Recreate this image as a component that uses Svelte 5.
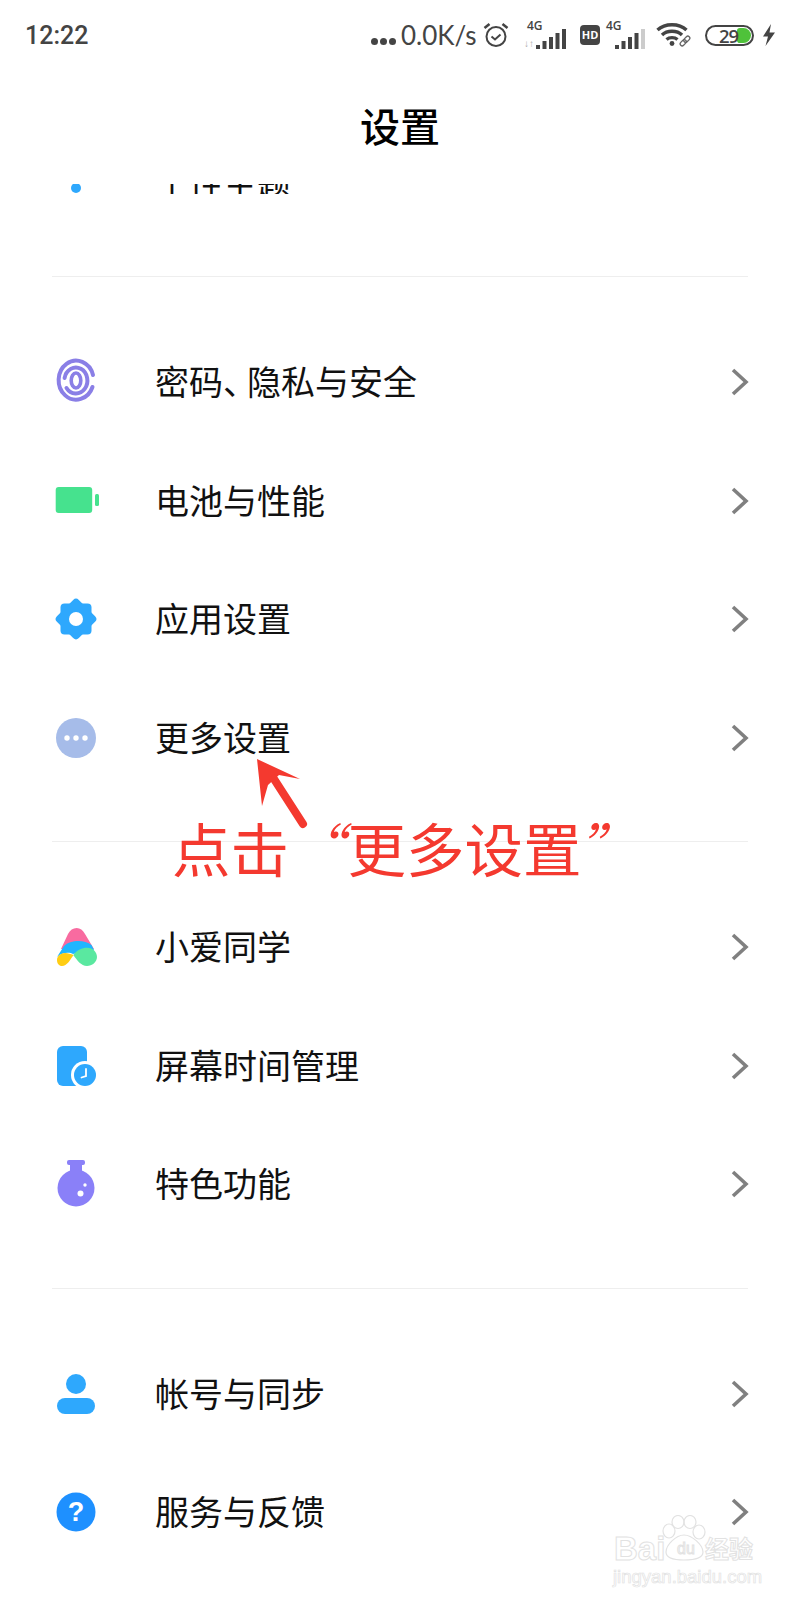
<script>
  const groups = [
    [
      { icon: 'finger', label: '密码', sep: '、', rest: '隐私与安全' },
      { icon: 'battery', label: '电池与性能' },
      { icon: 'gear', label: '应用设置' },
      { icon: 'more', label: '更多设置' }
    ],
    [
      { icon: 'xiaoai', label: '小爱同学' },
      { icon: 'screen', label: '屏幕时间管理' },
      { icon: 'flask', label: '特色功能' }
    ],
    [
      { icon: 'user', label: '帐号与同步' },
      { icon: 'help', label: '服务与反馈' }
    ]
  ]
</script>

{#snippet bars(lastDim)}
  <svg class="signal" width="30" height="22" viewBox="0 0 30 22">
    <rect x="0" y="17" width="4" height="4" fill="#444" />
    <rect x="6.5" y="13" width="4" height="8" fill="#444" />
    <rect x="13" y="9" width="4" height="12" fill="#444" />
    <rect x="19.5" y="5" width="4" height="16" fill="#444" />
    <rect x="26" y="1" width="4" height="20" fill={lastDim ? '#ccc' : '#444'} />
  </svg>
{/snippet}

{#snippet rowIcon(name)}
  <svg width="56" height="56" viewBox="0 0 56 56">
    {#if name === 'finger'}
      <g fill="none" stroke="#8a7fe6" stroke-width="4" stroke-linecap="round">
        <path d="M45 21 A17.5 19.5 0 1 0 44.5 33" />
        <path d="M16.6 24 A11.5 13 0 1 1 18.5 34" />
        <ellipse cx="28" cy="26.5" rx="4.8" ry="7.5" stroke-width="3.6" />
      </g>
    {:else if name === 'battery'}
      <rect x="7.7" y="14" width="36.5" height="26" rx="3" fill="#46e28e" />
      <rect x="47" y="21" width="4" height="12" rx="1.5" fill="#46e28e" />
    {:else if name === 'gear'}
      <rect x="12.5" y="12.5" width="31" height="31" rx="4" fill="#2ea8fd" />
      <rect x="12.5" y="12.5" width="31" height="31" rx="4" fill="#2ea8fd" transform="rotate(45 28 28)" />
      <circle cx="28" cy="28" r="7" fill="#fff" />
    {:else if name === 'more'}
      <circle cx="28" cy="28" r="20" fill="#a6bce9" />
      <circle cx="19" cy="28" r="2.7" fill="#fff" />
      <circle cx="28" cy="28" r="2.7" fill="#fff" />
      <circle cx="37" cy="28" r="2.7" fill="#fff" />
    {:else if name === 'xiaoai'}
      <path d="M28.7 9 C25 9 22 11 20 15 L13 30 L46 30 L37 15 C35 11 32 9 28.7 9 Z" fill="#f86ba0" />
      <path d="M16 27 C22 21 36 20 43.5 26 L46 31 L25 35 C22 33 14 33 9 38 Z" fill="#1fb6ff" />
      <path d="M9 41 C9 37 13 34 17 34 C20 34 23 35 25.5 36 C22 41 19 47 14 47 C11 47 9 44.5 9 41 Z" fill="#ffcd14" />
      <path d="M25.3 36 C29 31 34 28.7 39 28.7 C45 28.7 49 33 49 38 C49 43 44 47 39 47 C33 47 29 41 25.3 36 Z" fill="#5ae8a0" />
    {:else if name === 'screen'}
      <rect x="9" y="8" width="30" height="40" rx="6" fill="#2ea8fd" />
      <circle cx="37" cy="37" r="14" fill="#fff" />
      <circle cx="37" cy="37" r="11" fill="#2ea8fd" />
      <path d="M38 31 L38 38 L33.5 39.5" fill="none" stroke="#fff" stroke-width="1.8" stroke-linecap="round" />
    {:else if name === 'flask'}
      <rect x="19" y="4" width="18" height="5" rx="2" fill="#8a80f8" />
      <rect x="22" y="7" width="12" height="12" fill="#8a80f8" />
      <circle cx="28" cy="32" r="18.5" fill="#8a80f8" />
      <circle cx="32.5" cy="37.5" r="3" fill="#fff" />
      <circle cx="37" cy="29" r="1.7" fill="#fff" />
    {:else if name === 'user'}
      <circle cx="28" cy="18" r="10" fill="#2ea8fd" />
      <rect x="9" y="32" width="38" height="16" rx="8" fill="#2ea8fd" />
    {:else if name === 'help'}
      <circle cx="28" cy="28" r="19.5" fill="#1e90ff" />
      <text x="28" y="37" text-anchor="middle" class="qmark">?</text>
    {/if}
  </svg>
{/snippet}

<div class="screen">
  <div class="statusbar">
    <span class="time">12:22</span>
    <div class="status-right">
      <span class="dots"><i></i><i></i><i></i></span>
      <span class="speed">0.0K/s</span>
      <svg class="alarm" width="26" height="26" viewBox="0 0 26 26" fill="none" stroke="#444">
        <circle cx="13" cy="14.5" r="9.5" stroke-width="2" />
        <path d="M8.5 14.5 L12 17.5 L17.5 12.5" stroke-width="2" />
        <path d="M1.5 6 L6.5 2 M24.5 6 L19.5 2" stroke-width="2.6" />
      </svg>
      <div class="net first">
        <span class="g4">4G</span>
        <span class="updown">↓↑</span>
        {@render bars(false)}
      </div>
      <span class="hd">HD</span>
      <div class="net">
        <span class="g4">4G</span>
        {@render bars(true)}
      </div>
      <svg class="wifi" width="36" height="26" viewBox="0 0 36 26" fill="none" stroke="#444" stroke-width="3.4">
        <path d="M1.5 8 C9 1 23 1 30.5 8" />
        <path d="M6 13 C11 8 21 8 26 13" />
        <path d="M10.5 17.5 C13.5 15 18.5 15 21.5 17.5" />
        <circle cx="16" cy="21.5" r="2.4" fill="#444" stroke="none" />
        <g stroke="#666" stroke-width="1.3" transform="rotate(-45 29 19)">
          <rect x="23" y="17" width="7" height="4" rx="2" />
          <rect x="28" y="17" width="7" height="4" rx="2" />
        </g>
      </svg>
      <div class="battery">
        <span class="level">29</span>
        <span class="charge"></span>
      </div>
      <svg class="bolt" width="14" height="22" viewBox="0 0 14 22">
        <path d="M9 0 L1 12.5 L6 12.5 L3.5 22 L13 8.5 L7.5 8.5 Z" fill="#444" />
      </svg>
    </div>
  </div>

  <header class="title">设置</header>

  <div class="clip-row">
    <svg width="56" height="56" viewBox="0 0 56 56">
      <circle cx="28" cy="28" r="5" fill="#2ea8fd" />
    </svg>
    <span class="row-label">个性主题</span>
  </div>

  <div class="list">
    {#each groups as group}
      <section class="group">
        {#each group as row}
          <div class="row">
            <span class="row-icon">{@render rowIcon(row.icon)}</span>
            <span class="row-label">{row.label}{#if row.sep}<span class="sep">{row.sep}</span>{row.rest}{/if}</span>
            <svg class="chevron" width="18" height="28" viewBox="0 0 18 28" fill="none">
              <path d="M2 2 L15 14 L2 26" stroke="#808080" stroke-width="3.6" />
            </svg>
          </div>
        {/each}
      </section>
    {/each}
  </div>

  <!-- annotation drawn on top of the screenshot -->
  <svg class="arrow" width="70" height="80" viewBox="0 0 70 80">
    <path d="M1 1 L44 21 L23 17 L12 27 L6 48 Z" fill="#f4392f" />
    <path d="M18 21 L47 66" stroke="#f4392f" stroke-width="8" stroke-linecap="round" />
  </svg>
  <div class="note">点击<span class="quote open">“</span>更多设置<span class="quote close">”</span></div>

  <div class="watermark">
    <svg class="paw" width="46" height="46" viewBox="0 0 46 46" fill="none" stroke="#e2e2e2" stroke-width="1.2">
      <ellipse cx="7" cy="16" rx="6" ry="7" />
      <ellipse cx="16" cy="7" rx="6" ry="6.5" />
      <ellipse cx="28" cy="7" rx="6" ry="6.5" />
      <ellipse cx="37" cy="17" rx="6" ry="7" />
      <path d="M22 20 C14 20 4 30 4 37 C4 43 10 45 22 45 C34 45 41 43 41 37 C41 30 30 20 22 20 Z" />
    </svg>
    <span class="wm-bai">Bai</span>
    <span class="wm-du">du</span>
    <span class="wm-cn">经验</span>
    <span class="wm-url">jingyan.baidu.com</span>
  </div>
</div>

<style>
  :global(body) {
    margin: 0;
    background: #fff;
  }

  .screen {
    position: relative;
    width: 800px;
    height: 1600px;
    overflow: hidden;
    background: #fff;
    color: #111;
    font-family: "Noto Sans CJK SC", "Noto Sans", sans-serif;
  }

  .statusbar {
    height: 70px;
    padding: 0 24px 0 25px;
    display: flex;
    align-items: center;
    justify-content: space-between;
    box-sizing: border-box;
    color: #444;
    font-family: "Open Sans", sans-serif;
  }

  .time {
    font-family: Roboto, sans-serif;
    font-size: 25px;
    font-weight: 500;
  }

  .status-right {
    display: flex;
    align-items: center;
  }

  .dots {
    display: flex;
    gap: 2px;
    margin-top: 12px;
  }

  .dots i {
    width: 7px;
    height: 7px;
    border-radius: 50%;
    background: #444;
  }

  .speed {
    width: 76px;
    font-family: Lato, sans-serif;
    font-size: 26px;
    margin-left: 5px;
    white-space: nowrap;
  }

  .alarm {
    margin-left: 6px;
  }

  .net {
    position: relative;
    width: 39px;
    height: 30px;
    margin-left: 6px;
    display: flex;
    justify-content: flex-end;
    align-items: flex-end;
  }

  .net.first {
    width: 42px;
    margin-left: 15px;
  }

  .net.first .g4 {
    left: 3px;
  }

  .g4 {
    position: absolute;
    left: 0;
    top: 0;
    font-size: 12px;
    line-height: 12px;
    font-weight: 600;
  }

  .updown {
    position: absolute;
    left: 0;
    bottom: 2px;
    font-size: 10px;
    line-height: 10px;
    color: #aaa;
  }

  .hd {
    width: 20px;
    height: 20px;
    margin-left: 14px;
    border-radius: 4px;
    background: #444;
    color: #fff;
    font-size: 11px;
    font-weight: 700;
    line-height: 20px;
    text-align: center;
  }

  .wifi {
    margin-left: 11px;
    margin-right: -2px;
  }

  .battery {
    position: relative;
    width: 49px;
    height: 21px;
    margin-left: 15px;
    box-sizing: border-box;
    border: 2px solid #444;
    border-radius: 11px;
    font-size: 18.5px;
    font-weight: 600;
    line-height: 17px;
    letter-spacing: -1px;
  }

  .level {
    position: absolute;
    left: 12px;
    top: 0;
    z-index: 1;
  }

  .charge {
    position: absolute;
    right: 1px;
    top: 1px;
    width: 14px;
    height: 15px;
    border-radius: 3px 8px 8px 3px;
    background: #4fc23a;
  }

  .bolt {
    margin-left: 8px;
  }

  .title {
    height: 114px;
    line-height: 110px;
    text-align: center;
    font-size: 40px;
    font-weight: 500;
    color: #000;
  }

  .clip-row {
    height: 10px;
    padding-left: 48px;
    display: flex;
    align-items: flex-end;
    overflow: hidden;
  }

  .clip-row svg {
    flex: none;
    margin-bottom: -21.7px;
  }

  .clip-row .row-label {
    flex: none;
    margin-left: 51px;
    margin-bottom: -22px;
    line-height: 60px;
    height: 60px;
  }

  .list {
    margin: 0 52px;
    padding-top: 82px;
  }

  .group {
    padding: 46px 0 44px;
    border-top: 1px solid #eeeeee;
    margin: 0;
  }

  .row {
    height: 118.5px;
    display: flex;
    align-items: center;
  }

  .row-icon {
    flex: none;
    width: 103px;
    margin-left: -4px;
    margin-right: 4px;
    display: flex;
  }

  .row-label {
    flex: 1;
    font-size: 34px;
    padding-bottom: 3px;
    color: #111;
  }

  .sep {
    letter-spacing: -10px;
  }

  .chevron {
    flex: none;
    margin-right: -1px;
  }

  .qmark {
    fill: #fff;
    font-family: "Liberation Sans", sans-serif;
    font-size: 27px;
    font-weight: 700;
  }

  .arrow {
    position: absolute;
    left: 256px;
    top: 758px;
  }

  .note {
    position: absolute;
    left: 172px;
    top: 805px;
    font-size: 58.5px;
    line-height: 84px;
    color: #f4392f;
    white-space: nowrap;
  }

  .quote {
    font-style: italic;
    font-weight: 300;
  }

  .quote.open {
    margin-left: -5px;
    margin-right: 5px;
  }

  .quote.close {
    margin-left: -4px;
  }

  .watermark {
    position: absolute;
    left: 612px;
    top: 1512px;
    width: 150px;
    height: 76px;
    color: transparent;
    font-family: "Liberation Sans", sans-serif;
    -webkit-text-stroke: 1px #e2e2e2;
  }

  .paw {
    position: absolute;
    left: 50px;
    top: 3px;
  }

  .wm-bai {
    position: absolute;
    left: 2px;
    top: 20px;
    font-size: 33px;
    line-height: 34px;
    font-weight: 700;
  }

  .wm-du {
    position: absolute;
    left: 65px;
    top: 28px;
    font-size: 16px;
    line-height: 18px;
  }

  .wm-cn {
    position: absolute;
    left: 93px;
    top: 22px;
    font-family: "Noto Sans CJK SC", sans-serif;
    font-size: 24px;
    line-height: 28px;
    font-weight: 700;
  }

  .wm-url {
    position: absolute;
    left: 1px;
    top: 55px;
    font-size: 18.5px;
    line-height: 20px;
    white-space: nowrap;
    -webkit-text-stroke-width: 0.7px;
  }
</style>
